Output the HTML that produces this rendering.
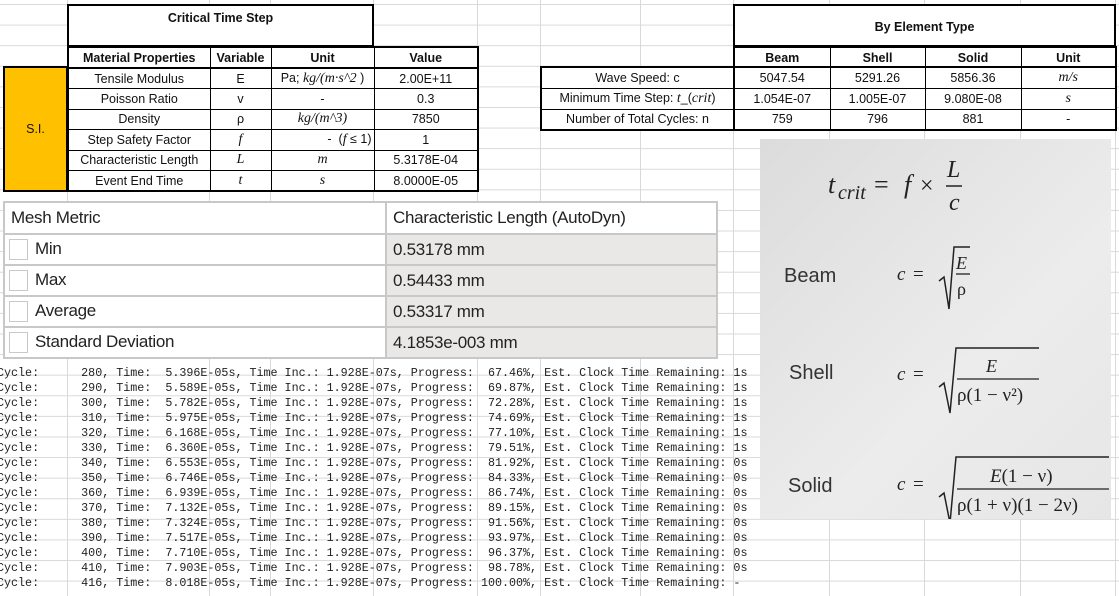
<!DOCTYPE html>
<html><head><meta charset="utf-8"><style>
*{margin:0;padding:0;box-sizing:border-box}
body{width:1119px;height:596px;position:relative;overflow:hidden;background:#fff;font-family:"Liberation Sans",sans-serif;color:#111}
.grid{position:absolute;left:0;top:0;width:1119px;height:596px;
background-image:linear-gradient(to bottom,#d9d9d9 1px,transparent 1px);background-size:100% 20.6px;background-position:0 4px}
.v{position:absolute;top:0;width:1px;height:596px;background:#d9d9d9}
table{position:absolute;border-collapse:collapse;font-size:12.5px;table-layout:fixed}
td{text-align:center;border:1px solid #000;padding:0;white-space:nowrap;overflow:hidden;background:#fff}
.b{font-weight:bold}
.i{font-family:"Liberation Serif",serif;font-style:italic;font-size:14px}
.mesh{font-size:17px;color:#222;letter-spacing:-0.3px}
.mesh td{border:2px solid #c8c8c8;text-align:left;padding-left:6px}
.mesh td.g{background:#e9e8e6}
.cb{display:inline-block;width:19px;height:21px;border:1px solid #c9c9c9;vertical-align:middle;margin-right:7px;background:#fff}
pre{position:absolute;left:-3px;top:366px;font-family:"Liberation Mono",monospace;font-size:11.7px;line-height:15px;color:#222;background:transparent}
.panel{position:absolute;left:760px;top:139px;width:351px;height:380px;background:linear-gradient(135deg,#dcdcdc,#ececec 60%,#e6e6e6)}
</style></head><body>
<div class="grid"></div>
<div class="v" style="left:67px"></div><div class="v" style="left:209px"></div><div class="v" style="left:270px"></div><div class="v" style="left:373px"></div><div class="v" style="left:477px"></div><div class="v" style="left:540px"></div><div class="v" style="left:640px"></div><div class="v" style="left:733px"></div><div class="v" style="left:829px"></div><div class="v" style="left:924px"></div><div class="v" style="left:1020px"></div><div class="v" style="left:1115px"></div>

<div style="position:absolute;left:67px;top:4px;width:307px;height:43px;border:2px solid #000;background:#fff;text-align:center;font-weight:bold;font-size:12.5px;padding-top:5px">Critical Time Step</div>
<div style="position:absolute;left:3px;top:66px;width:65px;height:126px;border:2px solid #000;background:#ffc000;font-size:12.5px;text-align:center;line-height:122px">S.I.</div>
<table style="left:67px;top:46px;border:2px solid #000">
<colgroup><col style="width:142px"><col style="width:61px"><col style="width:103px"><col style="width:104px"></colgroup>
<tr style="height:21px" class="b"><td style="border-bottom:2px solid #000">Material Properties</td><td style="border-bottom:2px solid #000">Variable</td><td style="border-bottom:2px solid #000">Unit</td><td style="border-bottom:2px solid #000">Value</td></tr>
<tr style="height:20.5px"><td>Tensile Modulus</td><td>E</td><td>Pa; <span class="i">kg/(m·s^2</span> )</td><td>2.00E+11</td></tr>
<tr style="height:20.5px"><td>Poisson Ratio</td><td>v</td><td>-</td><td>0.3</td></tr>
<tr style="height:20.5px"><td>Density</td><td>ρ</td><td><span class="i">kg/(m^3)</span></td><td>7850</td></tr>
<tr style="height:20.5px"><td>Step Safety Factor</td><td class="i">f</td><td style="text-align:right;padding-right:2px">- &nbsp;(<span class="i">f</span> ≤ 1)</td><td>1</td></tr>
<tr style="height:20.5px"><td>Characteristic Length</td><td class="i">L</td><td class="i">m</td><td>5.3178E-04</td></tr>
<tr style="height:20.5px"><td>Event End Time</td><td class="i">t</td><td class="i">s</td><td>8.0000E-05</td></tr>
</table>

<div style="position:absolute;left:733px;top:4px;width:383px;height:43px;border:2px solid #000;background:#fff;text-align:center;font-weight:bold;font-size:12.5px;line-height:42px">By Element Type</div>
<table style="left:733px;top:46px;border:2px solid #000;border-bottom:none">
<colgroup><col style="width:96px"><col style="width:95px"><col style="width:96px"><col style="width:95px"></colgroup>
<tr style="height:21px" class="b"><td>Beam</td><td>Shell</td><td>Solid</td><td>Unit</td></tr></table>
<table style="left:540px;top:66px;border:2px solid #000">
<colgroup><col style="width:193px"><col style="width:96px"><col style="width:95px"><col style="width:96px"><col style="width:95px"></colgroup>
<tr style="height:21px"><td style="border-right:2px solid #000">Wave Speed: c</td><td>5047.54</td><td>5291.26</td><td>5856.36</td><td class="i">m/s</td></tr>
<tr style="height:21px"><td style="border-right:2px solid #000">Minimum Time Step: <span class="i">t</span>_(<span class="i">crit</span>)</td><td>1.054E-07</td><td>1.005E-07</td><td>9.080E-08</td><td class="i">s</td></tr>
<tr style="height:21px"><td style="border-right:2px solid #000">Number of Total Cycles: n</td><td>759</td><td>796</td><td>881</td><td>-</td></tr>
</table>

<table class="mesh" style="left:3px;top:201px">
<colgroup><col style="width:382px"><col style="width:331px"></colgroup>
<tr style="height:32px"><td>Mesh Metric</td><td>Characteristic Length (AutoDyn)</td></tr>
<tr style="height:31px"><td style="padding-left:4px"><span class="cb"></span>Min</td><td class="g">0.53178 mm</td></tr>
<tr style="height:31px"><td style="padding-left:4px"><span class="cb"></span>Max</td><td class="g">0.54433 mm</td></tr>
<tr style="height:31px"><td style="padding-left:4px"><span class="cb"></span>Average</td><td class="g">0.53317 mm</td></tr>
<tr style="height:31px"><td style="padding-left:4px"><span class="cb"></span>Standard Deviation</td><td class="g">4.1853e-003 mm</td></tr>
</table>

<pre>Cycle:      280, Time:  5.396E-05s, Time Inc.: 1.928E-07s, Progress:  67.46%, Est. Clock Time Remaining: 1s
Cycle:      290, Time:  5.589E-05s, Time Inc.: 1.928E-07s, Progress:  69.87%, Est. Clock Time Remaining: 1s
Cycle:      300, Time:  5.782E-05s, Time Inc.: 1.928E-07s, Progress:  72.28%, Est. Clock Time Remaining: 1s
Cycle:      310, Time:  5.975E-05s, Time Inc.: 1.928E-07s, Progress:  74.69%, Est. Clock Time Remaining: 1s
Cycle:      320, Time:  6.168E-05s, Time Inc.: 1.928E-07s, Progress:  77.10%, Est. Clock Time Remaining: 1s
Cycle:      330, Time:  6.360E-05s, Time Inc.: 1.928E-07s, Progress:  79.51%, Est. Clock Time Remaining: 1s
Cycle:      340, Time:  6.553E-05s, Time Inc.: 1.928E-07s, Progress:  81.92%, Est. Clock Time Remaining: 0s
Cycle:      350, Time:  6.746E-05s, Time Inc.: 1.928E-07s, Progress:  84.33%, Est. Clock Time Remaining: 0s
Cycle:      360, Time:  6.939E-05s, Time Inc.: 1.928E-07s, Progress:  86.74%, Est. Clock Time Remaining: 0s
Cycle:      370, Time:  7.132E-05s, Time Inc.: 1.928E-07s, Progress:  89.15%, Est. Clock Time Remaining: 0s
Cycle:      380, Time:  7.324E-05s, Time Inc.: 1.928E-07s, Progress:  91.56%, Est. Clock Time Remaining: 0s
Cycle:      390, Time:  7.517E-05s, Time Inc.: 1.928E-07s, Progress:  93.97%, Est. Clock Time Remaining: 0s
Cycle:      400, Time:  7.710E-05s, Time Inc.: 1.928E-07s, Progress:  96.37%, Est. Clock Time Remaining: 0s
Cycle:      410, Time:  7.903E-05s, Time Inc.: 1.928E-07s, Progress:  98.78%, Est. Clock Time Remaining: 0s
Cycle:      416, Time:  8.018E-05s, Time Inc.: 1.928E-07s, Progress: 100.00%, Est. Clock Time Remaining: -</pre>

<div class="panel">
<svg width="351" height="380" viewBox="0 0 351 380" style="position:absolute;left:0;top:0" font-family="Liberation Serif, serif" fill="#222">
<text x="68" y="54" font-size="26" font-style="italic">t</text>
<text x="78" y="60" font-size="20" font-style="italic">crit</text>
<text x="114" y="54" font-size="26">=</text>
<text x="144" y="54" font-size="26" font-style="italic">f</text>
<text x="160" y="54" font-size="24">×</text>
<text x="187" y="38" font-size="24" font-style="italic">L</text>
<line x1="186" y1="47" x2="202" y2="47" stroke="#222" stroke-width="1.5"/>
<text x="189" y="71" font-size="24" font-style="italic">c</text>

<text x="24" y="143" font-size="20" font-family="Liberation Sans, sans-serif" fill="#333">Beam</text>
<text x="137" y="141" font-size="19" font-style="italic">c</text><text x="153" y="141" font-size="19">=</text>
<path d="M179 142 L184 138 L189 170 L194 108 L210 108" fill="none" stroke="#222" stroke-width="1.5"/>
<text x="196" y="130" font-size="18" font-style="italic">E</text>
<line x1="196" y1="135" x2="210" y2="135" stroke="#222" stroke-width="1.3"/>
<text x="197" y="156" font-size="18">ρ</text>

<text x="29" y="240" font-size="20" font-family="Liberation Sans, sans-serif" fill="#333">Shell</text>
<text x="137" y="241" font-size="19" font-style="italic">c</text><text x="153" y="241" font-size="19">=</text>
<path d="M179 248 L184 244 L190 274 L196 209 L279 209" fill="none" stroke="#222" stroke-width="1.5"/>
<text x="226" y="233" font-size="18" font-style="italic">E</text>
<line x1="197" y1="240" x2="279" y2="240" stroke="#222" stroke-width="1.3"/>
<text x="197" y="262" font-size="19">ρ(1 − ν²)</text>

<text x="28" y="353" font-size="20" font-family="Liberation Sans, sans-serif" fill="#333">Solid</text>
<text x="137" y="351" font-size="19" font-style="italic">c</text><text x="153" y="351" font-size="19">=</text>
<path d="M179 358 L184 354 L190 384 L196 318 L349 318" fill="none" stroke="#222" stroke-width="1.5"/>
<text x="230" y="343" font-size="19"><tspan font-style="italic">E</tspan>(1 − ν)</text>
<line x1="197" y1="350" x2="349" y2="350" stroke="#222" stroke-width="1.3"/>
<text x="197" y="372" font-size="19">ρ(1 + ν)(1 − 2ν)</text>
</svg>
</div>
</body></html>
